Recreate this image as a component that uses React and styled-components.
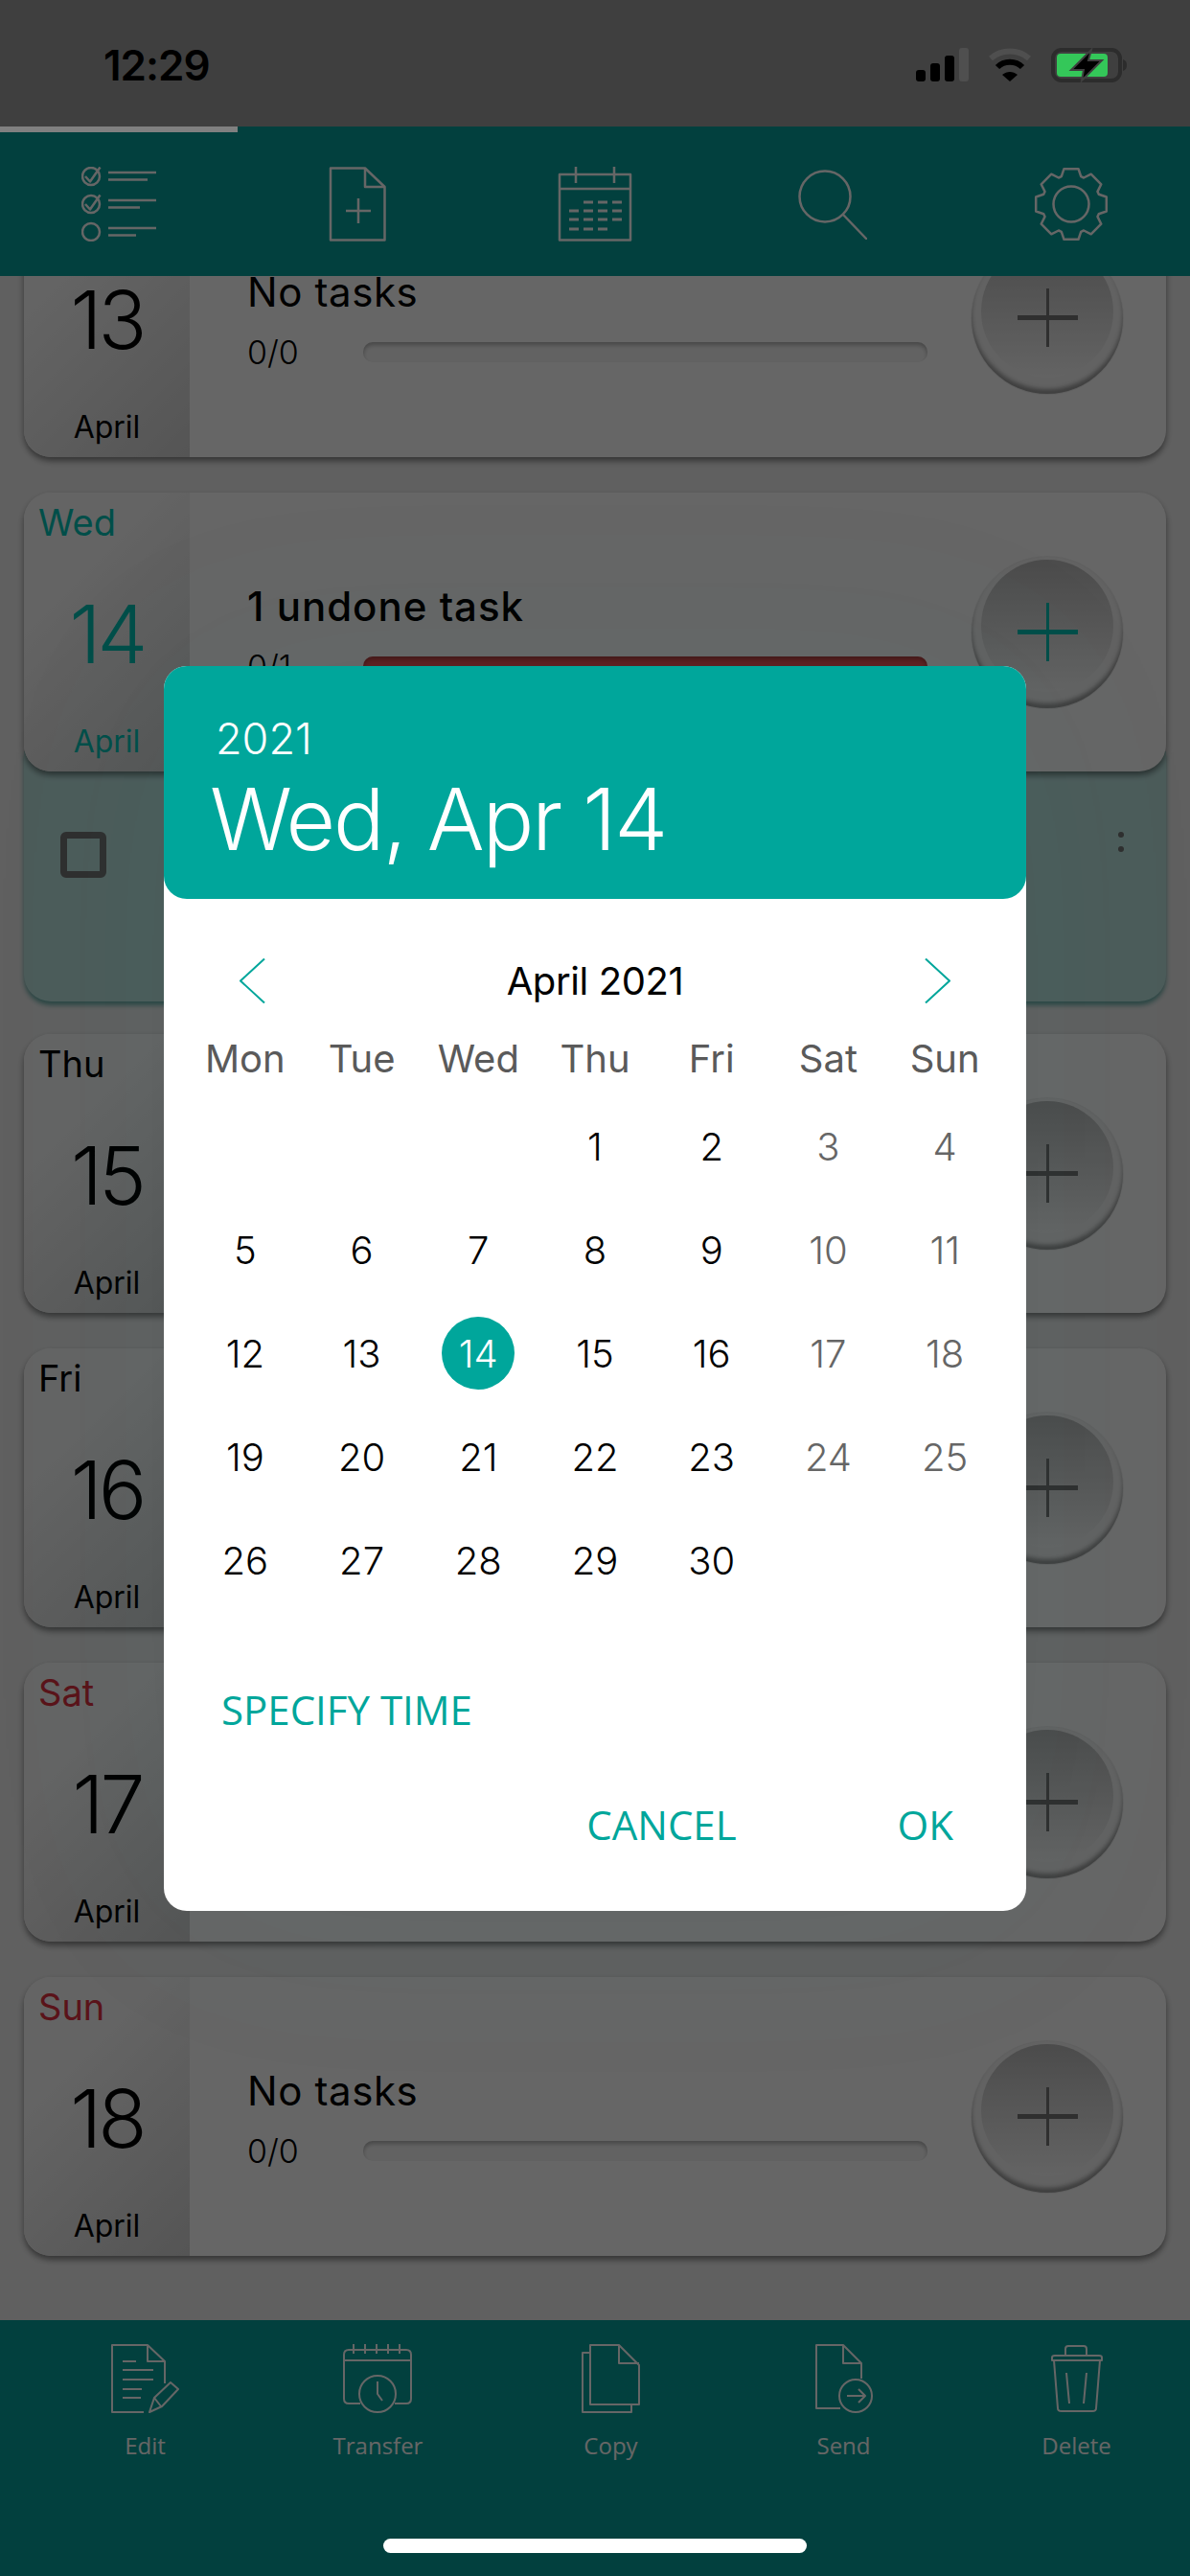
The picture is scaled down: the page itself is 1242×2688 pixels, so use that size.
import React from 'react'
import styled, { createGlobalStyle } from 'styled-components'

const TEAL = '#00a69b'
const BAR_TEAL = '#07a09b'
const UI_FONT = `Inter, "Noto Sans", sans-serif`
const LABEL_FONT = `"Open Sans", "Noto Sans", sans-serif`

const GlobalStyle = createGlobalStyle`
    html, body { margin: 0; padding: 0; background: #606060; }
    * { box-sizing: border-box; }
`

const Screen = styled.div`
    position: relative;
    width: 1242px;
    height: 2688px;
    display: flex;
    flex-direction: column;
    overflow: hidden;
    background: #f0f0f0;
    font-family: ${UI_FONT};
    color: #000;
`

const StatusBar = styled.div`
    position: relative;
    z-index: 3;
    height: 132px;
    flex: none;
    display: flex;
    align-items: flex-start;
    justify-content: space-between;
    padding: 50px 65px 0 108px;
    background: #3f3f3f;
`

const Clock = styled.div`
    font-size: 44px;
    font-weight: 600;
    line-height: 36px;
    letter-spacing: -1px;
`

const StatusIcons = styled.div`
    display: flex;
    gap: 20px;
`

const TabIndicator = styled.div`
    position: absolute;
    z-index: 3;
    top: 132px;
    left: 0;
    width: 248px;
    height: 6px;
    background: #808080;
`

const TopBar = styled.div`
    height: 156px;
    flex: none;
    display: grid;
    grid-template-columns: repeat(5, 1fr);
    align-items: center;
    justify-items: center;
    padding-top: 6px;
    background: ${BAR_TEAL};
    color: #fff;
`

const TaskList = styled.div`
    flex: 1;
    min-height: 0;
    overflow: hidden;
    padding: 0 25px;
`

const DayGroup = styled.div`
    margin-top: ${p => p.$offset || 0}px;
    margin-bottom: ${p => p.$gap}px;
`

const Card = styled.div`
    position: relative;
    z-index: 1;
    height: 291px;
    display: flex;
    border-radius: 28px;
    overflow: hidden;
    background: #fff;
    box-shadow: 0 4px 6px rgba(0, 0, 0, 0.45);
`

const DateColumn = styled.div`
    width: 173px;
    flex: none;
    display: flex;
    flex-direction: column;
    padding: 8px 0 9px;
    background: linear-gradient(135deg, #fafafa 30%, #d4d4d4 100%);
    color: ${p => (p.$today ? '#00c4b6' : '#000')};
`

const Weekday = styled.div`
    height: 46px;
    padding-left: 15px;
    font-size: 38px;
    line-height: 46px;
    color: ${p => (p.$tone === 'today' ? '#00c4b6' : p.$tone === 'weekend' ? '#e0303f' : '#000')};
`

const DayNumber = styled.div`
    flex: 1;
    display: flex;
    align-items: center;
    justify-content: center;
    padding-top: 3px;
    font-size: 84px;
    font-weight: 300;
    letter-spacing: -4px;
`

const MonthName = styled.div`
    height: 44px;
    text-align: center;
    font-size: 32px;
    line-height: 44px;
`

const CardBody = styled.div`
    flex: 1;
    min-width: 0;
    display: flex;
    align-items: center;
    gap: 46px;
    padding: 0 45px 0 60px;
`

const Info = styled.div`
    flex: 1;
    min-width: 0;
    margin-top: 4px;
`

const TaskTitle = styled.div`
    font-size: 42px;
    font-weight: ${p => (p.$pending ? 500 : 400)};
    line-height: 50px;
    letter-spacing: ${p => (p.$pending ? 1 : 0.6)}px;
`

const MetaRow = styled.div`
    display: flex;
    align-items: center;
    height: 40px;
    margin-top: 18px;
`

const Count = styled.div`
    width: 121px;
    flex: none;
    font-size: 34px;
    font-weight: 300;
`

const ProgressBar = styled.div`
    flex: 1;
    height: 21px;
    border-radius: 10px;
    background: ${p => (p.$pending ? '#eb5050' : '#f6f6f6')};
    box-shadow: inset 0 3px 4px rgba(0, 0, 0, 0.28);
`

const PlusButton = styled.div`
    width: 158px;
    height: 158px;
    flex: none;
    display: flex;
    align-items: flex-start;
    justify-content: center;
    padding-top: 3px;
    border-radius: 50%;
    background: #f4f4f4;
    box-shadow: 0 0 0 1px rgba(0, 0, 0, 0.06), inset 0 -5px 4px rgba(0, 0, 0, 0.35);
`

const PlusWell = styled.div`
    width: 138px;
    height: 138px;
    display: flex;
    align-items: center;
    justify-content: center;
    padding-top: 14px;
    border-radius: 50%;
    background: linear-gradient(180deg, #bcbcbc, #f8f8f8);
    color: ${p => (p.$today ? '#00c4b6' : '#777')};
`

const TaskPanel = styled.div`
    position: relative;
    height: 261px;
    margin-top: -21px;
    display: flex;
    justify-content: space-between;
    padding: 84px 44px 0 38px;
    border-radius: 0 0 28px 28px;
    background: #bfe6e2;
    box-shadow: 0 4px 5px rgba(0, 120, 110, 0.55);
`

const Checkbox = styled.div`
    width: 48px;
    height: 48px;
    border: 7px solid #757575;
    border-radius: 6px;
`

const MoreDots = styled.div`
    display: flex;
    flex-direction: column;
    gap: 9px;
`

const Dot = styled.span`
    width: 6px;
    height: 6px;
    border-radius: 50%;
    background: #757575;
`

const BottomBar = styled.div`
    height: 267px;
    flex: none;
    display: grid;
    grid-template-columns: repeat(5, 243px);
    align-content: start;
    justify-items: center;
    padding: 25px 0 0 30px;
    background: ${BAR_TEAL};
`

const Action = styled.div`
    display: flex;
    flex-direction: column;
    align-items: center;
    color: #fff;
`

const ActionLabel = styled.div`
    margin-top: 17px;
    font-family: ${LABEL_FONT};
    font-size: 24px;
    line-height: 34px;
`

const Scrim = styled.div`
    position: absolute;
    z-index: 2;
    inset: 0;
    background: rgba(0, 0, 0, 0.6);
`

const Dialog = styled.div`
    position: absolute;
    z-index: 3;
    top: 695px;
    left: 171px;
    width: 900px;
    height: 1299px;
    border-radius: 24px;
    background: #fff;
    box-shadow: 0 0 240px rgba(0, 166, 155, 0.05);
`

const DialogHeader = styled.div`
    height: 243px;
    padding: 50px 0 0 54px;
    border-radius: 24px;
    background: ${TEAL};
    color: #fff;
`

const HeaderYear = styled.div`
    font-size: 45px;
    font-weight: 300;
    line-height: 52px;
`

const HeaderDate = styled.div`
    margin: 8px 0 0 -6px;
    font-size: 89px;
    font-weight: 300;
    line-height: 100px;
    letter-spacing: -2px;
    white-space: nowrap;
`

const MonthNav = styled.div`
    height: 90px;
    margin-top: 40px;
    display: flex;
    align-items: center;
    justify-content: space-between;
    padding: 0 79px;
    font-size: 40px;
    letter-spacing: -0.4px;
`

const WeekRow = styled.div`
    height: 72px;
    display: grid;
    grid-template-columns: repeat(7, 1fr);
    align-items: center;
    padding: 0 24px;
    margin-bottom: 2px;
`

const WeekName = styled.div`
    text-align: center;
    font-size: 40px;
    color: #5a5a5a;
`

const DayGrid = styled.div`
    display: grid;
    grid-template-columns: repeat(7, 1fr);
    grid-auto-rows: 108px;
    padding: 0 24px;
`

const DayCell = styled.div`
    display: flex;
    align-items: center;
    justify-content: center;
`

const DayMark = styled.div`
    width: 76px;
    height: 76px;
    display: flex;
    align-items: center;
    justify-content: center;
    border-radius: 50%;
    font-size: 40px;
    font-weight: 300;
    background: ${p => (p.$selected ? TEAL : 'transparent')};
    color: ${p => (p.$selected ? '#fff' : p.$weekend ? '#666' : '#000')};
`

const TextButton = styled.div`
    font-family: ${LABEL_FONT};
    font-size: 42px;
    line-height: 60px;
    color: ${TEAL};
`

const SpecifyRow = styled.div`
    margin-top: 72px;
    padding-left: 60px;
`

const DialogActions = styled.div`
    margin-top: 60px;
    display: flex;
    justify-content: flex-end;
    gap: 168px;
    padding-right: 76px;
`

const HomeIndicator = styled.div`
    position: absolute;
    z-index: 3;
    left: 400px;
    top: 2649px;
    width: 442px;
    height: 15px;
    border-radius: 8px;
    background: #fff;
`

const Line = ({ w, h, sw = 2, children }) => (
    <svg width={w} height={h} viewBox={`0 0 ${w} ${h}`} fill="none" stroke="currentColor" strokeWidth={sw} strokeLinejoin="round">
        {children}
    </svg>
)

const SignalIcon = () => (
    <svg width="55" height="35" viewBox="0 0 55 35">
        <rect x="0" y="23" width="10" height="12" rx="3" fill="#000" />
        <rect x="15" y="16" width="10" height="19" rx="3" fill="#000" />
        <rect x="30" y="8" width="10" height="27" rx="3" fill="#000" />
        <rect x="45" y="0" width="10" height="35" rx="3" fill="#4f4f4f" />
    </svg>
)

const WifiIcon = () => (
    <svg width="46" height="35" viewBox="0 0 46 35" fill="none">
        <path d="M3 11C14 1 32 1 43 11" stroke="#4f4f4f" strokeWidth="6" />
        <path d="M10 20C17 13 29 13 36 20" stroke="#000" strokeWidth="6" />
        <path d="M15 28C20 24 26 24 31 28L23 35Z" fill="#000" />
    </svg>
)

const BatteryIcon = () => (
    <svg width="80" height="36" viewBox="0 0 80 36" fill="none">
        <rect x="2" y="2" width="70" height="32" rx="9" stroke="#2c2c2c" strokeWidth="4" />
        <rect x="6" y="6" width="53" height="24" rx="4" fill="#34c759" />
        <path d="M75 12C78 13 79 15 79 18S78 23 75 24Z" fill="#2c2c2c" />
        <path d="M42 2L21 23H34L32 34L53 13H39Z" fill="#000" stroke="#3f3f3f" strokeWidth="2" />
    </svg>
)

const ChecklistIcon = () => {
    const rows = [
        { y: 10, end: 69, checked: true },
        { y: 39, end: 61, checked: true },
        { y: 68, end: 57, checked: false },
    ]
    return (
        <Line w={78} h={78} sw={2.5}>
            {rows.map(r => (
                <g key={r.y}>
                    <circle cx="10" cy={r.y} r="9" />
                    {r.checked && <path d={`M4 ${r.y}L9 ${r.y + 5.5}L19.5 ${r.y - 9.5}`} />}
                    <path d={`M28 ${r.y - 4}H78M28 ${r.y + 3.5}H${r.end}`} />
                </g>
            ))}
        </Line>
    )
}

const NewDocIcon = () => (
    <Line w={60} h={78} sw={2.5}>
        <path d="M2 1.5H38L58.5 21V76.5H2Z" />
        <path d="M38 1.5V21H58.5M31 33V59M18 46H44" />
    </Line>
)

const CalendarIcon = () => {
    const dashes = [
        [37, [32, 47, 62]],
        [46, [17, 32, 47, 62]],
        [55, [17, 32, 47, 62]],
        [65, [17, 32, 47]],
    ]
    return (
        <Line w={78} h={78} sw={2.5}>
            <path d="M2 8H76V76.5H2ZM2 23H76M19 0V17M59 0V17" />
            {dashes.map(([y, xs]) => xs.map(x => <path key={`${x}-${y}`} d={`M${x - 5} ${y}H${x + 5}`} strokeWidth="3" />))}
        </Line>
    )
}

const SearchIcon = () => (
    <Line w={72} h={73} sw={2.5}>
        <circle cx="28" cy="28" r="26.5" />
        <path d="M48 48L71 72" strokeLinecap="round" />
    </Line>
)

const gearPoints = () => {
    const pts = []
    for (let i = 0; i < 8; i++) {
        const a = (i * Math.PI) / 4 - Math.PI / 2
        const steps = [[-0.34, 30.5], [-0.2, 37.5], [0.2, 37.5], [0.34, 30.5]]
        steps.forEach(([d, r]) => pts.push(`${(39 + r * Math.cos(a + d)).toFixed(1)},${(39 + r * Math.sin(a + d)).toFixed(1)}`))
    }
    return pts.join(' ')
}

const GearIcon = () => (
    <Line w={78} h={78} sw={2.5}>
        <polygon points={gearPoints()} />
        <circle cx="39" cy="39" r="18.5" />
    </Line>
)

const EditIcon = () => (
    <Line w={72} h={72}>
        <path d="M34 71H1V1H38L56 18V41M38 1V18H56" />
        <path d="M12 18H26M12 27H44M12 37H44M12 47H32M12 56H31" />
        <path d="M40 71L45 56L62 40L70 47L53 65Z M45 56L52 65" />
    </Line>
)

const TransferIcon = () => (
    <Line w={72} h={72}>
        <path d="M18 62H6Q1 62 1 57V11Q1 6 6 6H66Q71 6 71 11V57Q71 62 66 62H54M1 17H71" />
        <path d="M11 0V10M23 0V10M35 0V10M47 0V10M59 0V10" />
        <circle cx="36" cy="52" r="19" />
        <path d="M36 39V52L41 59" />
    </Line>
)

const CopyIcon = () => (
    <Line w={61} h={72}>
        <path d="M9 9H1V71H52V64" />
        <path d="M9 1H39L60 22V63H9Z" />
        <path d="M39 1V20H60" />
    </Line>
)

const SendIcon = () => (
    <Line w={60} h={72}>
        <path d="M26 67H1V1H29L48 20V36M29 1V20H48" />
        <circle cx="42" cy="54" r="17" />
        <path d="M33 54H51M45 47L52 54L45 61" />
    </Line>
)

const TrashIcon = () => (
    <Line w={58} h={72}>
        <path d="M3 17V14Q3 12 6 12H52Q55 12 55 14V17Z" />
        <path d="M17 11V5Q17 2 20 2H36Q39 2 39 5V11" />
        <path d="M5 17L9 67Q9 70 13 70H45Q49 70 49 67L53 17" />
        <path d="M18 30L21 62M39 30L36 62" />
    </Line>
)

const PlusIcon = () => (
    <svg width="63" height="61" viewBox="0 0 63 61" fill="currentColor">
        <rect x="0" y="28" width="63" height="5" />
        <rect x="30" y="0" width="3" height="61" />
    </svg>
)

const ChevronIcon = ({ flip }) => (
    <svg width="27" height="47" viewBox="0 0 27 47" fill="none" stroke={TEAL} strokeWidth="2">
        <path d={flip ? 'M1 0.5L26 23.5L1 46.5' : 'M26 0.5L1 23.5L26 46.5'} />
    </svg>
)

const days = [
    { name: 'Tue', date: 13, offset: -102 },
    { name: 'Wed', date: 14, today: true, pending: true },
    { name: 'Thu', date: 15 },
    { name: 'Fri', date: 16 },
    { name: 'Sat', date: 17, weekend: true },
    { name: 'Sun', date: 18, weekend: true },
]

const actions = [
    { label: 'Edit', icon: <EditIcon /> },
    { label: 'Transfer', icon: <TransferIcon /> },
    { label: 'Copy', icon: <CopyIcon /> },
    { label: 'Send', icon: <SendIcon /> },
    { label: 'Delete', icon: <TrashIcon /> },
]

const weekNames = ['Mon', 'Tue', 'Wed', 'Thu', 'Fri', 'Sat', 'Sun']
const leadingBlanks = [0, 1, 2]
const monthDays = Array.from({ length: 30 }, (_, i) => i + 1)

const tone = d => (d.today ? 'today' : d.weekend ? 'weekend' : 'plain')

const DayCard = ({ day }) => (
    <Card>
        <DateColumn $today={day.today}>
            <Weekday $tone={tone(day)}>{day.name}</Weekday>
            <DayNumber>{day.date}</DayNumber>
            <MonthName>April</MonthName>
        </DateColumn>
        <CardBody>
            <Info>
                <TaskTitle $pending={day.pending}>{day.pending ? '1 undone task' : 'No tasks'}</TaskTitle>
                <MetaRow>
                    <Count>{day.pending ? '0/1' : '0/0'}</Count>
                    <ProgressBar $pending={day.pending} />
                </MetaRow>
            </Info>
            <PlusButton>
                <PlusWell $today={day.today}>
                    <PlusIcon />
                </PlusWell>
            </PlusButton>
        </CardBody>
    </Card>
)

const App = () => (
    <Screen>
        <GlobalStyle />
        <StatusBar>
            <Clock>12:29</Clock>
            <StatusIcons>
                <SignalIcon />
                <WifiIcon />
                <BatteryIcon />
            </StatusIcons>
        </StatusBar>
        <TabIndicator />
        <TopBar>
            <ChecklistIcon />
            <NewDocIcon />
            <CalendarIcon />
            <SearchIcon />
            <GearIcon />
        </TopBar>
        <TaskList>
            {days.map(day => (
                <DayGroup key={day.date} $offset={day.offset} $gap={day.today ? 34 : 37}>
                    <DayCard day={day} />
                    {day.today && (
                        <TaskPanel>
                            <Checkbox />
                            <MoreDots>
                                <Dot />
                                <Dot />
                            </MoreDots>
                        </TaskPanel>
                    )}
                </DayGroup>
            ))}
        </TaskList>
        <BottomBar>
            {actions.map(a => (
                <Action key={a.label}>
                    {a.icon}
                    <ActionLabel>{a.label}</ActionLabel>
                </Action>
            ))}
        </BottomBar>
        <Scrim />
        <Dialog>
            <DialogHeader>
                <HeaderYear>2021</HeaderYear>
                <HeaderDate>Wed, Apr 14</HeaderDate>
            </DialogHeader>
            <MonthNav>
                <ChevronIcon />
                April 2021
                <ChevronIcon flip />
            </MonthNav>
            <WeekRow>
                {weekNames.map(n => <WeekName key={n}>{n}</WeekName>)}
            </WeekRow>
            <DayGrid>
                {leadingBlanks.map(b => <DayCell key={`blank-${b}`} />)}
                {monthDays.map((d, i) => {
                    const col = (i + leadingBlanks.length) % 7
                    return (
                        <DayCell key={d}>
                            <DayMark $selected={d === 14} $weekend={col > 4}>{d}</DayMark>
                        </DayCell>
                    )
                })}
            </DayGrid>
            <SpecifyRow>
                <TextButton>SPECIFY TIME</TextButton>
            </SpecifyRow>
            <DialogActions>
                <TextButton>CANCEL</TextButton>
                <TextButton>OK</TextButton>
            </DialogActions>
        </Dialog>
        <HomeIndicator />
    </Screen>
)

export default App
